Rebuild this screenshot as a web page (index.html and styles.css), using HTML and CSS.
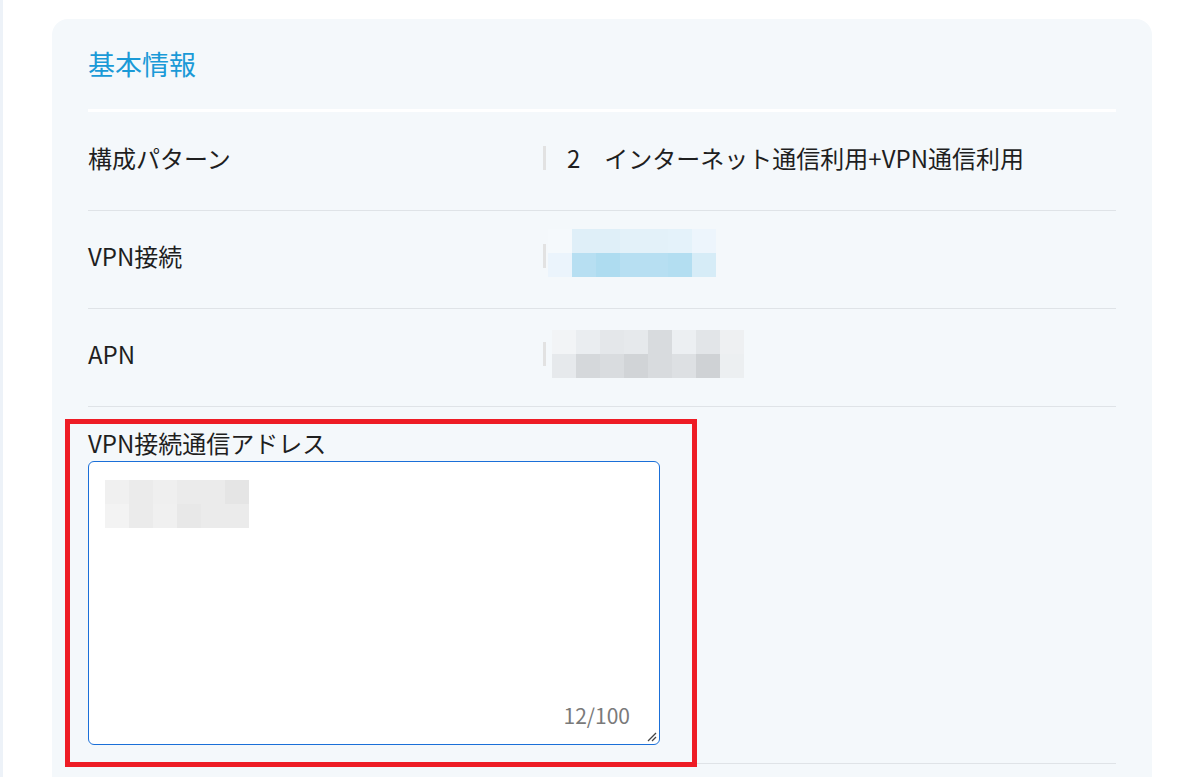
FILE: index.html
```html
<!DOCTYPE html>
<html lang="ja">
<head>
  <meta charset="UTF-8" />
  <meta name="viewport" content="width=device-width, initial-scale=1.0"/>
  <title>基本情報</title>
  <link rel="stylesheet" href="styles.css">
</head>
<body>
  <div class="page">
    <div class="card">
      <h2 class="card-title">基本情報</h2>

      <div class="row row-first">
        <div class="label">構成パターン</div>
        <div class="value"><span class="bar"></span><span>2　インターネット通信利用+VPN通信利用</span></div>
      </div>

      <div class="row">
        <div class="label">VPN接続</div>
        <div class="value"><span class="bar"></span><div class="mosaic mosaic-vpn" id="mosaicVpn"></div></div>
      </div>

      <div class="row">
        <div class="label">APN</div>
        <div class="value"><span class="bar"></span><div class="mosaic mosaic-apn" id="mosaicApn"></div></div>
      </div>

      <div class="field">
        <div class="highlight"></div>
        <label class="field-label">VPN接続通信アドレス</label>
        <div class="textbox">
          <div class="mosaic mosaic-addr" id="mosaicAddr"></div>
          <span class="counter">12/100</span>
          <svg class="grip" width="10" height="10" viewBox="0 0 10 10">
            <line x1="1" y1="9" x2="9" y2="1" stroke="#444" stroke-width="1.2"/>
            <line x1="5" y1="9" x2="9" y2="5" stroke="#444" stroke-width="1.2"/>
          </svg>
        </div>
      </div>

      <div class="row row-empty"></div>
    </div>
  </div>

  <script>
    // blurred values: two rows of 24px tiles each
    const mosaics = {
      mosaicVpn: [
        ["#f5f9fc", "#dfeff8", "#dfeff8", "#e3f1f9", "#e3f1f9", "#e4f2fa", "#edf5fc"],
        ["#ebf4fc", "#b7dff2", "#aedcf0", "#b7dff2", "#b7dff2", "#b3def1", "#d6ecf7"]
      ],
      mosaicApn: [
        ["#f2f4f6", "#eaedf0", "#e4e7ea", "#e6e9ec", "#d8dbde", "#eceff2", "#e2e5e8", "#eef0f2"],
        ["#e6e9ec", "#d5d8db", "#d9dcdf", "#d1d4d7", "#d8dbde", "#dde0e3", "#cfd2d5", "#eceff1"]
      ],
      mosaicAddr: [
        ["#f0f0f0", "#ebebeb", "#efefef", "#ebebeb", "#ebebeb", "#e5e5e5"],
        ["#f3f3f3", "#ebebeb", "#f0f0f0", "#e8e8e8", "#ebebeb", "#ebebeb"]
      ]
    };

    Object.keys(mosaics).forEach(id => {
      const box = document.getElementById(id);
      const rows = mosaics[id];
      box.style.gridTemplateColumns = `repeat(${rows[0].length}, 24px)`;
      rows.forEach(row => {
        row.forEach(color => {
          const tile = document.createElement("span");
          tile.style.background = color;
          box.appendChild(tile);
        });
      });
    });
  </script>
</body>
</html>
```

FILE: styles.css
```css
* { box-sizing: border-box; }
body {
  margin: 0;
  background: #fff;
  font-family: "Noto Sans CJK JP", "Noto Sans", sans-serif;
  color: #1f1f1f;
}

.page {
  border-left: 3px solid #edf2f8;
  min-height: 777px;
  padding-top: 19px;
}

.card {
  margin-left: 49px;
  width: 1100px;
  padding: 0 36px 40px;
  background: #f4f8fb;
  border-radius: 16px 16px 0 0;
}

.card-title {
  margin: 0;
  padding: 24px 0;
  font-size: 27px;
  font-weight: normal;
  line-height: 42px;
  color: #1a9ad7;
  border-bottom: 3px solid #fff;
}

.row {
  display: grid;
  grid-template-columns: 455px 1fr;
  align-items: start;
  padding: 27px 0 34px;
  border-bottom: 1px solid #dfe3e7;
  font-size: 24px;
  line-height: 36px;
}
.row-first { padding-top: 28px; }
.row-empty { padding: 0; border: none; }

.value {
  display: flex;
  align-items: center;
  height: 36px;
}
.bar {
  width: 3px;
  height: 24px;
  background: #e2e2e2;
  margin-right: 21px;
  flex-shrink: 0;
}

.mosaic {
  display: grid;
  grid-auto-rows: 24px;
}
.mosaic-vpn { margin: 0 0 0 -19px; transform: translateY(-3px); }
.mosaic-apn { margin: 0 0 0 -15px; transform: translateY(0); }

.field {
  position: relative;
  padding: 18px 0;
  border-bottom: 1px solid #dfe3e7;
}
.field-label {
  display: block;
  font-size: 24px;
  line-height: 36px;
}

.textbox {
  position: relative;
  width: 572px;
  height: 284px;
  background: #fff;
  border: 1px solid #1a6fd8;
  border-radius: 6px;
  padding: 18px 16px;
}
.mosaic-addr { width: max-content; }

.counter {
  position: absolute;
  right: 29px;
  bottom: 18px;
  font-size: 21px;
  line-height: 22px;
  color: #7a7a7a;
}
.grip {
  position: absolute;
  right: 2px;
  bottom: 2px;
}

/* red annotation frame */
.highlight {
  position: absolute;
  left: -23px;
  top: 12px;
  width: 632px;
  height: 348px;
  border: 5px solid #ee1c25;
  pointer-events: none;
}
```
